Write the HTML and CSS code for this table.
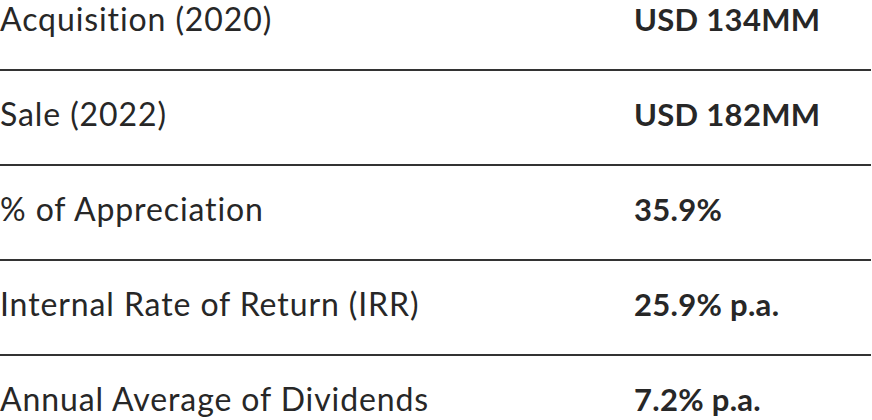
FILE: index.html
```html
<!DOCTYPE html>
<html lang="en">
<head>
<meta charset="utf-8">
<link rel="stylesheet" href="styles.css">
</head>
<body>
<div class="table">
  <div class="row"><span class="label">Acquisition (2020)</span><span class="value">USD 134MM</span></div>
  <div class="row"><span class="label">Sale (2022)</span><span class="value">USD 182MM</span></div>
  <div class="row"><span class="label">% of Appreciation</span><span class="value">35.9%</span></div>
  <div class="row"><span class="label">Internal Rate of Return (IRR)</span><span class="value">25.9% p.a.</span></div>
  <div class="row"><span class="label">Annual Average of Dividends</span><span class="value">7.2% p.a.</span></div>
</div>
</body>
</html>
```
FILE: styles.css
```css
html, body {
  margin: 0;
  padding: 0;
  background: #ffffff;
}
body {
  font-family: Lato, "Liberation Sans", sans-serif;
  color: #272727;
  width: 871px;
}
.table {
  display: flex;
  flex-direction: column;
}
.row {
  display: grid;
  grid-template-columns: 634px 1fr;
  align-items: baseline;
  line-height: 38px;
  padding: 24px 0 31px;
  border-bottom: 2px solid #333333;
}
.row:first-child {
  padding-top: 0;
}
.row:last-child {
  border-bottom: none;
  padding-bottom: 0;
}
.label {
  font-size: 32px;
  font-weight: 400;
  letter-spacing: 0.9px;
}
.value {
  font-size: 31px;
  font-weight: 700;
  letter-spacing: 0.3px;
}
```
